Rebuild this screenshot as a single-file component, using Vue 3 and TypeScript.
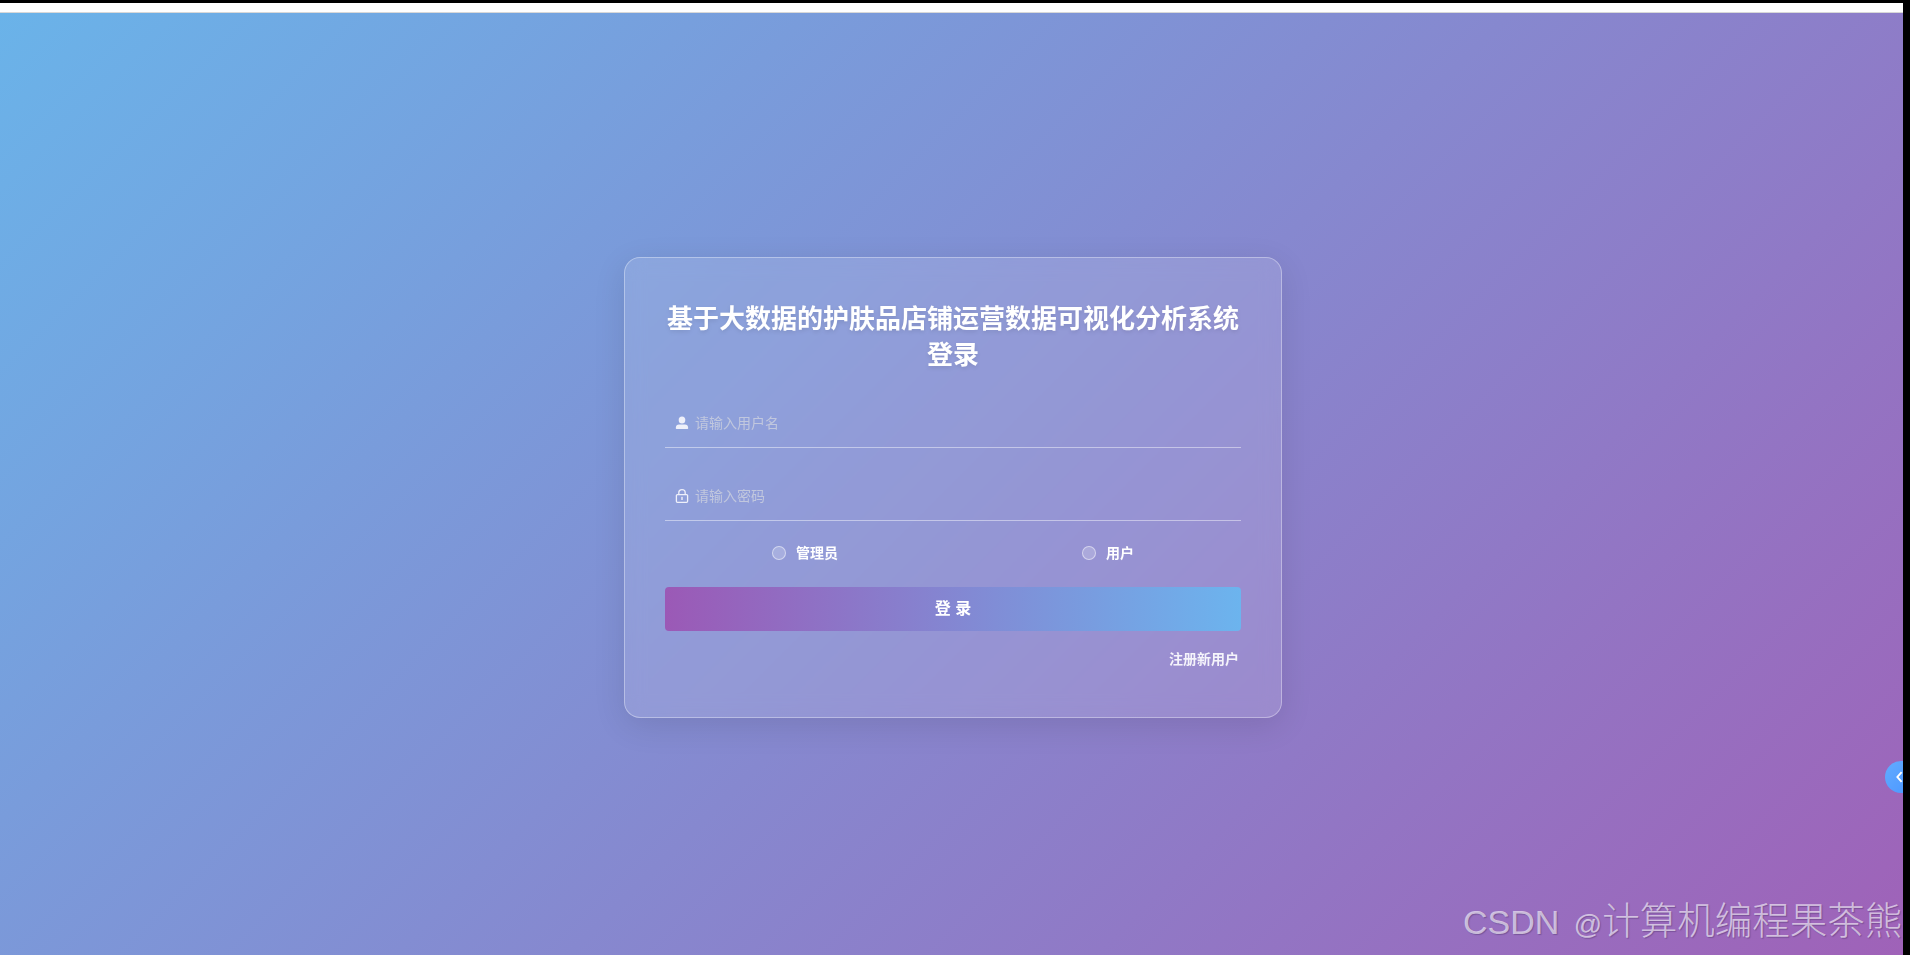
<script setup lang="ts">
import { ref } from 'vue'

const username = ref('')
const password = ref('')
const role = ref('')

const roles = [
  { value: 'admin', label: '管理员' },
  { value: 'user', label: '用户' },
]
</script>

<template>
  <div class="page">
    <div class="browser-top"></div>
    <div class="stage">
      <div class="login-card">
        <h1 class="title">基于大数据的护肤品店铺运营数据可视化分析系统登录</h1>

        <div class="field">
          <svg class="field-icon" viewBox="0 0 14 14" aria-hidden="true">
            <ellipse cx="7" cy="3.9" rx="3.3" ry="3.5" fill="currentColor" />
            <path d="M.8 12c0-2.600 1.400-3.600 3.200-3.600h6c1.800 0 3.200 1 3.200 3.600 0 .7-.4 1.100-1.100 1.100H1.900c-.7 0-1.100-.4-1.100-1.100z" fill="currentColor" />
          </svg>
          <input v-model="username" class="field-input" type="text" placeholder="请输入用户名" />
        </div>

        <div class="field">
          <svg class="field-icon" viewBox="0 0 14 14" aria-hidden="true">
            <path d="M3.800 5.800V3.800C3.800 2 5.200.7 7 .7s3.200 1.300 3.200 3.100v2" fill="none" stroke="currentColor" stroke-width="1.300" />
            <rect x="1.400" y="5.600" width="11.200" height="7.700" rx="1" fill="none" stroke="currentColor" stroke-width="1.300" />
            <rect x="6.300" y="7.800" width="1.400" height="3.200" fill="currentColor" />
          </svg>
          <input v-model="password" class="field-input" type="password" placeholder="请输入密码" />
        </div>

        <div class="roles">
          <label v-for="item in roles" :key="item.value" class="role">
            <input v-model="role" class="role-input" type="radio" :value="item.value" />
            <span class="role-dot" :class="{ checked: role === item.value }"></span>
            <span class="role-label">{{ item.label }}</span>
          </label>
        </div>

        <button class="submit" type="button">登 录</button>

        <div class="links">
          <a class="register" href="#">注册新用户</a>
        </div>
      </div>

      <div class="side-tab">
        <svg viewBox="0 0 8 14" width="7" height="12" aria-hidden="true">
          <path d="M6.500 1.200 1.500 7l5 5.800" fill="none" stroke="#fff" stroke-width="2.200" />
        </svg>
      </div>
      <div class="watermark">CSDN <span class="watermark-at">@</span><span class="watermark-name">计算机编程果茶熊</span></div>
    </div>
  </div>
</template>

<style>
html,
body {
  margin: 0;
  background: #000;
}
</style>

<style scoped>
.page {
  display: flex;
  flex-direction: column;
  width: 1903px;
  height: 955px;
  overflow: hidden;
  font-family: "Liberation Sans", "Noto Sans CJK SC", sans-serif;
}

.browser-top {
  flex: none;
  height: 9px;
  margin-top: 3px;
  background: #fff;
  border-bottom: 1px solid #d8d8d8;
}

.stage {
  position: relative;
  flex: 1;
  display: flex;
  align-items: center;
  justify-content: center;
  padding: 6px 0 0 3px;
  overflow: hidden;
  background: linear-gradient(135deg, #6ab3e9 0%, #9f62b8 100%);
}

.login-card {
  box-sizing: border-box;
  width: 658px;
  height: 461px;
  padding: 43px 40px 40px;
  background: rgba(255, 255, 255, 0.12);
  border: 1px solid rgba(255, 255, 255, 0.35);
  border-radius: 16px;
  box-shadow: 0 8px 32px rgba(0, 0, 0, 0.1);
  backdrop-filter: blur(10px);
}

.title {
  margin: 0 0 26px;
  color: #fff;
  font-size: 26px;
  line-height: 36.4px;
  font-weight: 700;
  text-align: center;
  text-shadow: 0 2px 4px rgba(0, 0, 0, 0.1);
}

.field {
  display: flex;
  align-items: center;
  height: 48px;
  margin-bottom: 24px;
  padding-left: 10px;
  border-bottom: 1px solid rgba(255, 255, 255, 0.45);
}

.field-icon {
  flex: none;
  width: 14px;
  height: 14px;
  margin-right: 6px;
  color: #eef0fa;
}

.field-input {
  flex: 1;
  min-width: 0;
  padding: 0;
  border: none;
  outline: none;
  background: transparent;
  color: #fff;
  font-family: inherit;
  font-size: 14px;
}

.field-input::placeholder {
  color: rgba(214, 216, 224, 0.7);
}

.roles {
  display: flex;
  justify-content: space-between;
  height: 20px;
  margin-top: -2px;
  padding: 0 107px 0 107px;
}

.role {
  display: flex;
  align-items: center;
  color: #fff;
  font-size: 14px;
  font-weight: 700;
  cursor: pointer;
}

.role-input {
  display: none;
}

.role-dot {
  box-sizing: border-box;
  width: 14px;
  height: 14px;
  margin-right: 10px;
  border: 1px solid rgba(255, 255, 255, 0.5);
  border-radius: 50%;
  background: rgba(255, 255, 255, 0.2);
}

.role-dot.checked {
  background: #fff;
}

.role-label {
  padding-bottom: 3px;
}

.submit {
  display: block;
  width: 100%;
  height: 44px;
  margin-top: 24px;
  padding: 0 0 5px;
  border: none;
  border-radius: 4px;
  background: linear-gradient(90deg, #9b59b6, #6cb4ee);
  color: #fff;
  font-family: inherit;
  font-size: 16px;
  font-weight: 700;
  cursor: pointer;
}

.links {
  display: flex;
  justify-content: flex-end;
  margin-top: 18px;
  padding-right: 2px;
}

.register {
  color: rgba(255, 255, 255, 0.9);
  font-size: 14px;
  font-weight: 700;
  line-height: 20px;
  text-decoration: none;
}

.side-tab {
  position: absolute;
  right: -14px;
  top: 748px;
  display: flex;
  align-items: center;
  width: 32px;
  height: 32px;
  padding-left: 11px;
  box-sizing: border-box;
  border-radius: 50%;
  background: linear-gradient(135deg, #62abff, #4a96ff);
}

.watermark {
  position: absolute;
  left: 1463px;
  bottom: 7px;
  color: rgba(255, 255, 255, 0.62);
  font-size: 34px;
  line-height: 46px;
  white-space: nowrap;
  text-shadow: 1px 1px 1px rgba(60, 40, 90, 0.35);
}

.watermark-at {
  font-size: 28px;
  margin-left: 5px;
}

.watermark-name {
  font-size: 37.500px;
  font-weight: 300;
}
</style>
